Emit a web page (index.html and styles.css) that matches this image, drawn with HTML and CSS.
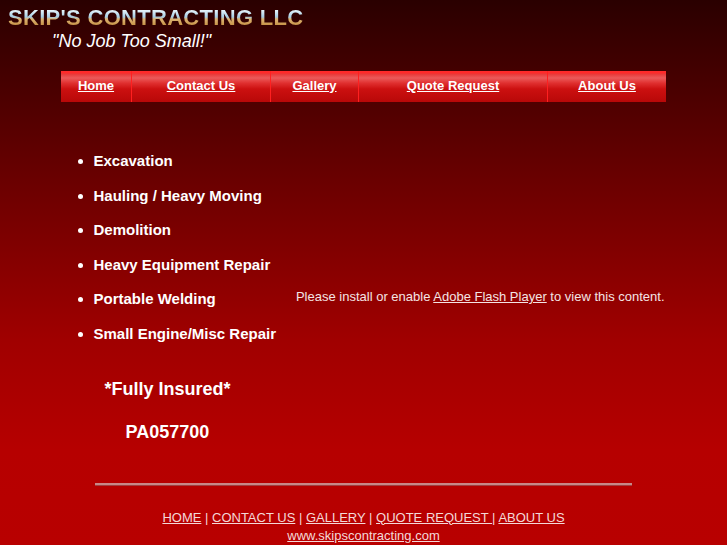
FILE: index.html
```html
<html lang="en">
<head>
    <meta charset="UTF-8">
    <meta name="viewport" content="width=device-width, initial-scale=1.0">
    <title>Skip's Contracting LLC</title>
    <link rel="stylesheet" href="styles.css">
</head>
<body>
    <div class="header">
        <div class="logo">SKIP'S CONTRACTING LLC</div>
        <div class="slogan">"No Job Too Small!"</div>
    </div>
    <div class="nav">
        <a class="nav-home" href="#">Home</a>
        <a class="nav-contact" href="#">Contact Us</a>
        <a class="nav-gallery" href="#">Gallery</a>
        <a class="nav-quote" href="#">Quote Request</a>
        <a class="nav-about" href="#">About Us</a>
    </div>
    <div class="content">
        <div class="services">
            <ul>
                <li>Excavation</li>
                <li>Hauling / Heavy Moving</li>
                <li>Demolition</li>
                <li>Heavy Equipment Repair</li>
                <li>Portable Welding</li>
                <li>Small Engine/Misc Repair</li>
            </ul>
            <div class="insured">*Fully Insured*</div>
            <div class="license">PA057700</div>
        </div>
        <div class="flash">
            Please install or enable <a href="#">Adobe Flash Player</a> to view this content.
        </div>
    </div>
    <div class="rule"></div>
    <div class="footer">
        <div><a href="#">HOME</a> | <a href="#">CONTACT US</a> | <a href="#">GALLERY</a> | <a href="#">QUOTE REQUEST </a> | <a href="#">ABOUT US</a></div>
        <div class="site"><a href="#">www.skipscontracting.com</a></div>
    </div>
</body>
</html>
```

FILE: styles.css
```css
body {
    margin: 0;
    padding: 0;
    height: 545px;
    overflow: hidden;
    font-family: "Liberation Sans", Arial, sans-serif;
    color: #ffffff;
    background: linear-gradient(to bottom, #2a0000 0px, #6a0000 180px, #a00000 340px, #b60000 450px, #b80000 545px);
}
.header {
    padding: 5px 0 0 8px;
}
.logo {
    display: inline-block;
    font-size: 22px;
    font-weight: bold;
    line-height: 26px;
    letter-spacing: 0.3px;
    background: linear-gradient(to bottom, #e8f6fc 5px, #a4cce4 12px, #dcb474 14px, #c08838 22px);
    -webkit-background-clip: text;
    background-clip: text;
    color: transparent;
}
.slogan {
    margin: 0 0 0 44px;
    font-size: 18px;
    font-style: italic;
    line-height: 20px;
    color: #ffffff;
}
.nav {
    display: flex;
    width: 605px;
    height: 31px;
    margin: 20px auto 0;
    background: linear-gradient(to bottom, #ff2a2a 0px, #ff2a2a 2px, #e83838 3px, #ec5a5a 7px, #e03030 12px, #cc1010 18px, #b80808 31px);
}
.nav a {
    display: flex;
    align-items: center;
    justify-content: center;
    padding-bottom: 2px;
    color: #ffffff;
    font-size: 13px;
    font-weight: bold;
    border-right: 1px solid #ff2020;
}
.nav a:last-child {
    border-right: none;
}
.nav-home { width: 70px; }
.nav-contact { width: 138px; }
.nav-gallery { width: 87px; }
.nav-quote { width: 188px; }
.nav-about { flex: 1; }
.content {
    display: flex;
    width: 610px;
    margin: 0 auto;
}
.services {
    width: 230px;
}
.services ul {
    margin: 49px 0 0;
    padding: 0 0 0 35px;
}
.services li {
    font-size: 15px;
    font-weight: bold;
    line-height: 20px;
    margin-bottom: 14.5px;
}
.insured {
    margin: 35px 0 0 46px;
    font-size: 18px;
    font-weight: bold;
}
.license {
    margin: 22px 0 0 67px;
    font-size: 18px;
    font-weight: bold;
}
.flash {
    flex: 1;
    padding: 187px 4px 0 0;
    text-align: right;
    font-size: 13px;
    color: #f4e4e4;
}
.flash a {
    color: #f4e4e4;
}
.rule {
    width: 537px;
    height: 2px;
    margin: 40px auto 0;
    background: #c88888;
    border-bottom: 1px solid #a04040;
}
.footer {
    margin-top: 23px;
    text-align: center;
    font-size: 13px;
    line-height: 18px;
    color: #f4d8d8;
}
.footer a {
    color: #f4d8d8;
}
```
